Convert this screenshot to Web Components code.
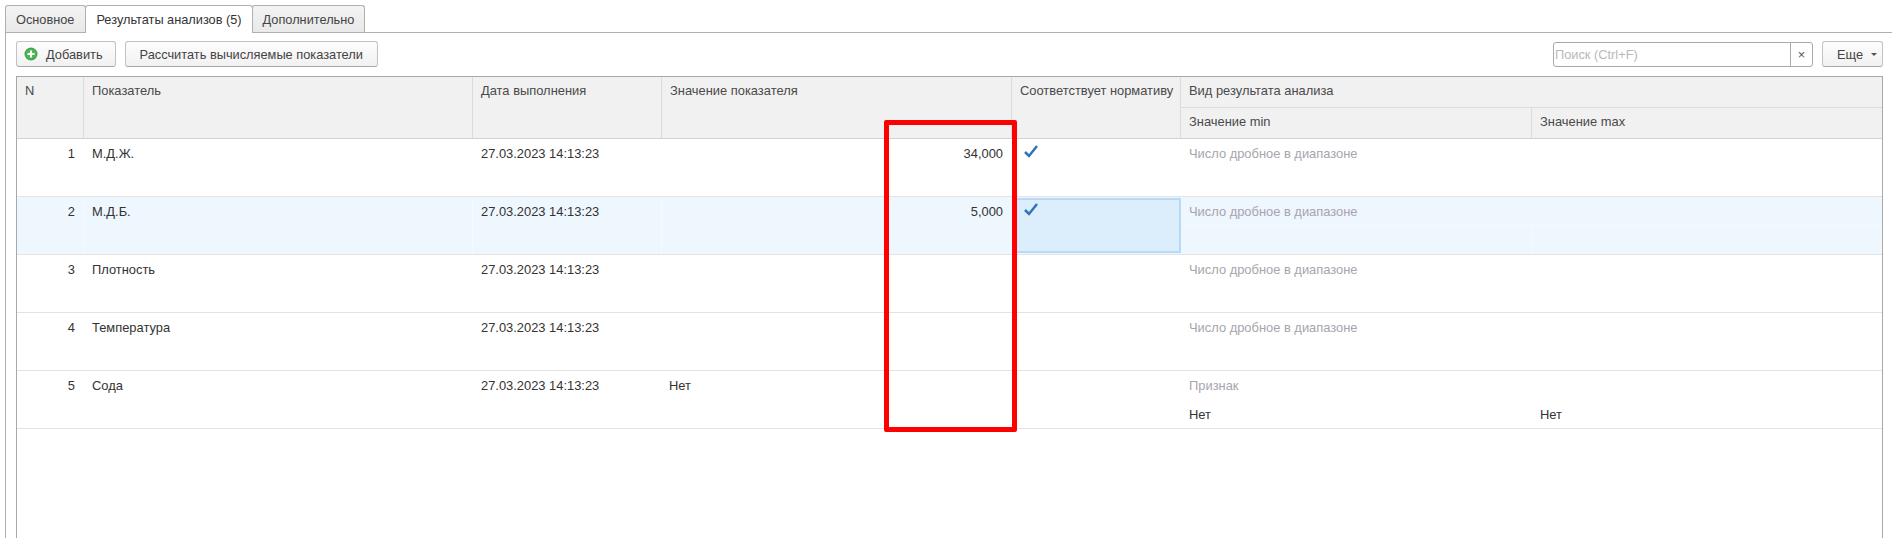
<!DOCTYPE html>
<html lang="ru">
<head>
<meta charset="utf-8">
<title>Результаты анализов</title>
<style>
    html, body { margin: 0; height: 100%; background: #fff; overflow: hidden; }
    body { font: 12.9px "Liberation Sans", Arial, sans-serif; color: #333; }
</style>
</head>
<body>
<analysis-form>
    <form-tab slot="tabs">Основное</form-tab>
    <form-tab slot="tabs" active>Результаты анализов (5)</form-tab>
    <form-tab slot="tabs">Дополнительно</form-tab>

    <form-button slot="left" icon="add">Добавить</form-button>
    <form-button slot="left" wide>Рассчитать вычисляемые показатели</form-button>
    <search-box slot="right"></search-box>
    <form-button slot="right" menu>Еще</form-button>

    <result-grid>
        <result-row n="1" name="М.Д.Ж." date="27.03.2023 14:13:23" num="34,000" check type="Число дробное в диапазоне"></result-row>
        <result-row n="2" name="М.Д.Б." date="27.03.2023 14:13:23" num="5,000" check selected type="Число дробное в диапазоне"></result-row>
        <result-row n="3" name="Плотность" date="27.03.2023 14:13:23" type="Число дробное в диапазоне"></result-row>
        <result-row n="4" name="Температура" date="27.03.2023 14:13:23" type="Число дробное в диапазоне"></result-row>
        <result-row n="5" name="Сода" date="27.03.2023 14:13:23" text="Нет" type="Признак" min="Нет" max="Нет"></result-row>
    </result-grid>
</analysis-form>

<script>
function createTemplate(s) {
    const template = document.createElement("template");
    template.innerHTML = s;
    return template;
}

function attachTemplate(el, template) {
    const root = el.attachShadow({ mode: "open" });
    root.appendChild(template.content.cloneNode(true));
    return root;
}

// ***** COMPONENTS *****

class AnalysisForm extends HTMLElement {
    static template = createTemplate(`
        <style>
            :host { display: block; position: relative; height: 538px; box-sizing: border-box; padding-top: 5px; overflow: hidden; }
            .tabs { display: flex; height: 27px; padding-left: 5px; font-size: 12.75px; }
            .panel { margin-left: 5px; border-top: 1px solid #b0b0b0; border-left: 1px solid #b0b0b0; height: 506px; box-sizing: border-box; padding: 8px 9px 0 10px; display: flex; flex-direction: column; gap: 9px; }
            .bar { display: flex; justify-content: space-between; height: 26px; font-size: 12.8px; }
            .group { display: flex; gap: 9px; }
            .mark { position: absolute; left: 884px; top: 120px; width: 133px; height: 312px; box-sizing: border-box; border: 5px solid #ff0000; border-radius: 2px; }
        </style>
        <div class="tabs"><slot name="tabs"></slot></div>
        <div class="panel">
            <div class="bar">
                <div class="group"><slot name="left"></slot></div>
                <div class="group"><slot name="right"></slot></div>
            </div>
            <slot></slot>
        </div>
        <div class="mark"></div>
    `);
    connectedCallback() {
        attachTemplate(this, AnalysisForm.template);
    }
}
customElements.define("analysis-form", AnalysisForm);

class FormTab extends HTMLElement {
    static template = createTemplate(`
        <style>
            :host { display: flex; align-items: center; box-sizing: border-box; height: 27px; padding: 0 10px; margin-right: -1px; background: linear-gradient(#f3f3f3, #e9e9e9); border: 1px solid #b0b0b0; border-bottom: 0; border-radius: 3px 3px 0 0; color: #444; white-space: nowrap; }
            :host(:first-child) { padding-right: 11px; }
            :host(:last-child) { padding-right: 9px; }
            :host([active]) { background: #fff; height: 28px; position: relative; z-index: 1; margin-bottom: -1px; color: #333; }
        </style>
        <slot></slot>
    `);
    connectedCallback() {
        attachTemplate(this, FormTab.template);
    }
}
customElements.define("form-tab", FormTab);

class FormButton extends HTMLElement {
    static template = createTemplate(`
        <style>
            :host { display: inline-flex; align-items: center; justify-content: center; box-sizing: border-box; height: 26px; padding: 0 14px; gap: 8px; background: linear-gradient(#fdfdfd, #f1f1f1); border: 1px solid #c2c2c2; border-bottom-color: #a8a8a8; border-radius: 3px; color: #444; white-space: nowrap; }
            :host([icon]) { padding: 0 12px 0 7px; }
            :host([menu]) { width: 61px; padding: 0 0 0 14px; justify-content: flex-start; }
            svg { display: block; flex: none; }
        </style>
        <span id="icon"></span>
        <slot></slot>
        <span id="caret"></span>
    `);
    connectedCallback() {
        const root = attachTemplate(this, FormButton.template);
        const icon = root.getElementById("icon");
        const caret = root.getElementById("caret");
        if (this.hasAttribute("icon")) {
            icon.innerHTML = `<svg width="14" height="14" viewBox="0 0 14 14"><circle cx="7" cy="7" r="6.5" fill="#3fa64a"/><circle cx="7" cy="7" r="5" fill="#4fb858"/><path d="M7 3.5v7M3.5 7h7" stroke="#fff" stroke-width="2"/></svg>`;
        } else {
            icon.remove();
        }
        if (this.hasAttribute("menu")) {
            caret.innerHTML = `<svg width="6" height="3" viewBox="0 0 6 3"><path d="M0 0h6L3 3z" fill="#555"/></svg>`;
        } else {
            caret.remove();
        }
    }
}
customElements.define("form-button", FormButton);

class SearchBox extends HTMLElement {
    static template = createTemplate(`
        <style>
            :host { display: flex; box-sizing: border-box; width: 260px; height: 25px; margin-top: 1px; border: 1px solid #a9a9a9; border-radius: 3px; background: #fff; }
            .hint { flex: 1; padding-left: 1px; line-height: 23px; color: #b9b9b9; }
            .clear { width: 21px; border-left: 1px solid #a9a9a9; display: flex; align-items: center; justify-content: center; color: #555; }
        </style>
        <div class="hint">Поиск (Ctrl+F)</div>
        <div class="clear">×</div>
    `);
    connectedCallback() {
        attachTemplate(this, SearchBox.template);
    }
}
customElements.define("search-box", SearchBox);

class ResultGrid extends HTMLElement {
    static template = createTemplate(`
        <style>
            :host { display: block; flex: 1; border: 1px solid #a8a8a8; border-bottom: 0; background: #fff; --cols: 67px 389px 189px 350px 169px 351px 1fr; }
            .head { display: grid; grid-template-columns: var(--cols); grid-template-rows: 31px 30px; background: #f1f1f1; border-bottom: 1px solid #d2d2d2; color: #4a4a4a; }
            .head div { box-sizing: border-box; padding: 6px 0 0 8px; border-right: 1px solid #dcdcdc; white-space: nowrap; }
            .tall { grid-row: 1 / 3; }
            .type { grid-column: 6 / 8; border-right: 0 !important; border-bottom: 1px solid #dcdcdc; }
            .last { border-right: 0 !important; }
        </style>
        <div class="head">
            <div class="tall">N</div>
            <div class="tall">Показатель</div>
            <div class="tall">Дата выполнения</div>
            <div class="tall">Значение показателя</div>
            <div class="tall">Соответствует нормативу</div>
            <div class="type">Вид результата анализа</div>
            <div class="sub">Значение min</div>
            <div class="sub last">Значение max</div>
        </div>
        <slot></slot>
    `);
    connectedCallback() {
        attachTemplate(this, ResultGrid.template);
    }
}
customElements.define("result-grid", ResultGrid);

class ResultRow extends HTMLElement {
    static template = createTemplate(`
        <style>
            :host { display: grid; grid-template-columns: var(--cols); grid-template-rows: 29px 28px; height: 57px; border-bottom: 1px solid #e3e3e3; color: #333; }
            :host([selected]) { background: #eef6fe; }
            .cell { grid-row: 1 / 3; box-sizing: border-box; padding: 7px 8px 0; border-right: 1px solid transparent; white-space: nowrap; }
            :host([selected]) .cell, :host([selected]) .line { border-right-color: #f6fafe; }
            .n, .num { text-align: right; }
            .check { padding: 6px 0 0 12px; }
            :host([selected]) .check { background: #dcedfc; border: 2px solid #b6d9f8; margin: 1px 0 1px 0; padding: 3px 0 0 10px; }
            .type { grid-column: 6 / 8; padding: 7px 8px 0; color: #a9a4ad; }
            :host([selected]) .type { border-bottom: 1px solid #f6fafe; }
            .line { padding: 7px 8px 0; border-right: 1px solid transparent; }
            svg { display: block; }
        </style>
        <div class="cell n"></div>
        <div class="cell name"></div>
        <div class="cell date"></div>
        <div class="cell num"></div>
        <div class="cell check"></div>
        <div class="type"></div>
        <div class="line min"></div>
        <div class="line max"></div>
    `);
    connectedCallback() {
        const root = attachTemplate(this, ResultRow.template);
        const put = (sel, val) => { root.querySelector(sel).textContent = val || ""; };
        put(".n", this.getAttribute("n"));
        put(".name", this.getAttribute("name"));
        put(".date", this.getAttribute("date"));
        put(".num", this.getAttribute("num") || this.getAttribute("text"));
        put(".type", this.getAttribute("type"));
        put(".min", this.getAttribute("min"));
        put(".max", this.getAttribute("max"));
        if (this.hasAttribute("text")) {
            root.querySelector(".num").style.textAlign = "left";
            root.querySelector(".num").style.paddingLeft = "7px";
        }
        if (this.hasAttribute("check")) {
            root.querySelector(".check").innerHTML = `<svg width="14" height="13" viewBox="0 0 14 13"><path d="M1 7l4 4 8-10" fill="none" stroke="#2e75b8" stroke-width="2.5"/></svg>`;
        }
    }
}
customElements.define("result-row", ResultRow);
</script>
</body>
</html>
